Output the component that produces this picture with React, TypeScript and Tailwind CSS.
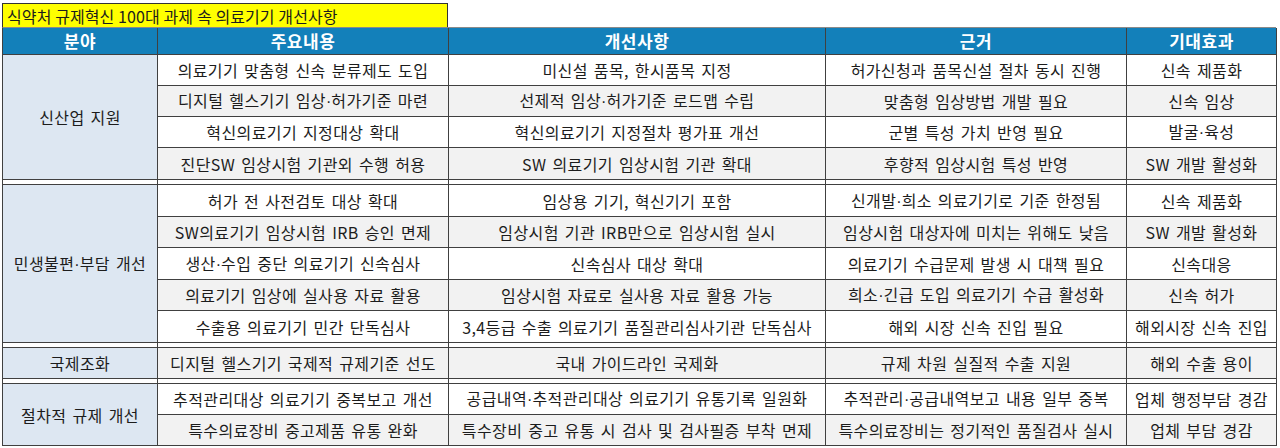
import React from "react";

type Row = { c: [string, string, string, string]; gray: boolean };
type Group = { name: string; span: string; rows: Row[] };

const groups: Group[] = [
  {
    name: "신산업 지원",
    span: "row-span-4",
    rows: [
      { c: ["의료기기 맞춤형 신속 분류제도 도입", "미신설 품목, 한시품목 지정", "허가신청과 품목신설 절차 동시 진행", "신속 제품화"], gray: false },
      { c: ["디지털 헬스기기 임상·허가기준 마련", "선제적 임상·허가기준 로드맵 수립", "맞춤형 임상방법 개발 필요", "신속 임상"], gray: true },
      { c: ["혁신의료기기 지정대상 확대", "혁신의료기기 지정절차 평가표 개선", "군별 특성 가치 반영 필요", "발굴·육성"], gray: false },
      { c: ["진단SW 임상시험 기관외 수행 허용", "SW 의료기기 임상시험 기관 확대", "후향적 임상시험 특성 반영", "SW 개발 활성화"], gray: true },
    ],
  },
  {
    name: "민생불편·부담 개선",
    span: "row-span-5",
    rows: [
      { c: ["허가 전 사전검토 대상 확대", "임상용 기기, 혁신기기 포함", "신개발·희소 의료기기로 기준 한정됨", "신속 제품화"], gray: false },
      { c: ["SW의료기기 임상시험 IRB 승인 면제", "임상시험 기관 IRB만으로 임상시험 실시", "임상시험 대상자에 미치는 위해도 낮음", "SW 개발 활성화"], gray: true },
      { c: ["생산·수입 중단 의료기기 신속심사", "신속심사 대상 확대", "의료기기 수급문제 발생 시 대책 필요", "신속대응"], gray: false },
      { c: ["의료기기 임상에 실사용 자료 활용", "임상시험 자료로 실사용 자료 활용 가능", "희소·긴급 도입 의료기기 수급 활성화", "신속 허가"], gray: true },
      { c: ["수출용 의료기기 민간 단독심사", "3,4등급 수출 의료기기 품질관리심사기관 단독심사", "해외 시장 신속 진입 필요", "해외시장 신속 진입"], gray: false },
    ],
  },
  {
    name: "국제조화",
    span: "row-span-1",
    rows: [
      { c: ["디지털 헬스기기 국제적 규제기준 선도", "국내 가이드라인 국제화", "규제 차원 실질적 수출 지원", "해외 수출 용이"], gray: true },
    ],
  },
  {
    name: "절차적 규제 개선",
    span: "row-span-2",
    rows: [
      { c: ["추적관리대상 의료기기 중복보고 개선", "공급내역·추적관리대상 의료기기 유통기록 일원화", "추적관리·공급내역보고 내용 일부 중복", "업체 행정부담 경감"], gray: false },
      { c: ["특수의료장비 중고제품 유통 완화", "특수장비 중고 유통 시 검사 및 검사필증 부착 면제", "특수의료장비는 정기적인 품질검사 실시", "업체 부담 경감"], gray: true },
    ],
  },
];

const headers = ["분야", "주요내용", "개선사항", "근거", "기대효과"];

const cellBase =
  "flex items-center justify-center border-r border-b border-[#404040] whitespace-nowrap overflow-hidden";

function Txt({ t }: { t: string }) {
  const parts = t.split("·");
  return (
    <span>
      {parts.map((p, i) => (
        <React.Fragment key={i}>
          {i > 0 && <span className="font-['Liberation_Sans',sans-serif] tracking-normal">·</span>}
          {p}
        </React.Fragment>
      ))}
    </span>
  );
}

export default function App() {
  return (
    <div className="w-[1280px] h-[448px] bg-white pl-[2px] pt-[3px] font-['Noto_Sans_CJK_KR','Noto_Sans',sans-serif] text-[#1c1c1c]">
      <div className="w-[446px] h-[24px] bg-[#ffff00] border-l border-t border-r border-[#333333] flex items-center pl-[4px] leading-none text-[16px] tracking-[0.1px]">
        식약처 규제혁신 100대 과제 속 의료기기 개선사항
      </div>
      <div className="grid grid-cols-[155px_291px_377px_301px_150px] grid-rows-[27px_31px_31px_31px_32px_5px_32px_31px_32px_31px_32px_5px_31px_5px_31px_31px] border-l border-t border-l-[#404040] border-t-[#8a8a8a] w-[1274px] text-[16px] tracking-[0.4px] [word-spacing:2px]">
        {headers.map((h) => (
          <div key={h} className={`${cellBase} bg-[#1380ba] text-white font-bold text-[17px] tracking-[0.5px]`}>
            {h}
          </div>
        ))}
        {groups.map((g, gi) => (
          <React.Fragment key={g.name}>
            {gi > 0 &&
              [0, 1, 2, 3, 4].map((k) => (
                <div key={`sep${gi}-${k}`} className="border-r border-b border-[#404040] bg-white" />
              ))}
            <div className={`${cellBase} ${g.span} bg-[#dde7f2]`}>
              <Txt t={g.name} />
            </div>
            {g.rows.map((r, ri) =>
              r.c.map((t, ci) => (
                <div
                  key={`${gi}-${ri}-${ci}`}
                  className={`${cellBase} ${r.gray ? "bg-[#f2f2f2]" : "bg-white"}`}
                >
                  <Txt t={t} />
                </div>
              ))
            )}
          </React.Fragment>
        ))}
      </div>
    </div>
  );
}
